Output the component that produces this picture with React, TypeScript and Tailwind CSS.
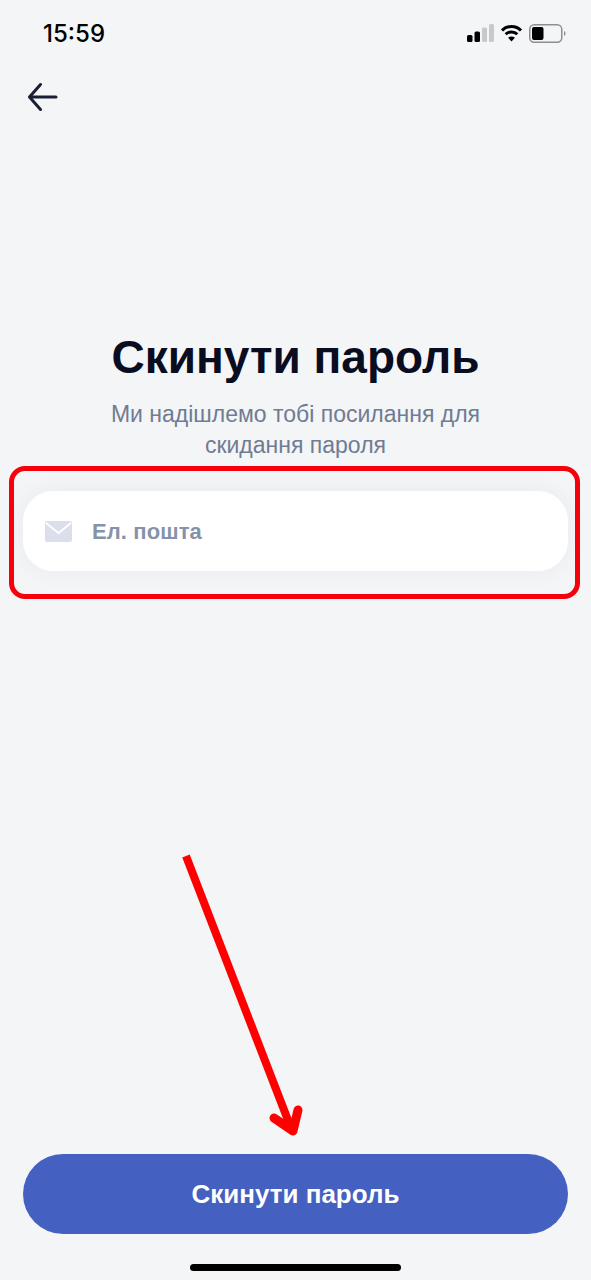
import React from 'react';

const StatusIcons: React.FC = () => (
  <div className="flex items-center gap-[6px]">
    <svg width="27" height="18" viewBox="0 0 27 18">
      <rect x="0" y="11" width="5.500" height="7" rx="1.500" fill="#000" />
      <rect x="7.500" y="7.500" width="5.500" height="10.500" rx="1.500" fill="#000" />
      <rect x="15" y="3.500" width="5" height="14.500" rx="1.500" fill="#c8c9cb" />
      <rect x="22" y="0" width="5" height="18" rx="1.500" fill="#c8c9cb" />
    </svg>
    <svg width="23" height="18" viewBox="0 0 22 18" fill="none" stroke="#000" strokeWidth="3">
      <path d="M1.500 6.500C6.500 1.200 15.500 1.200 20.500 6.500" />
      <path d="M5.200 10.300C8.200 7.200 13.800 7.200 16.800 10.300" />
      <path d="M11 17.500L7.600 13.800C9.400 12.200 12.600 12.200 14.400 13.800Z" fill="#000" stroke="none" />
    </svg>
    <svg width="37" height="19" viewBox="0 0 37 19">
      <rect x="0.750" y="0.750" width="32" height="17.500" rx="4.500" fill="none" stroke="#8e8e90" strokeWidth="1.500" />
      <rect x="3" y="3" width="11.500" height="13" rx="2" fill="#000" />
      <path d="M35 7c1 .5 1.500 1.400 1.500 2.500S36 11.500 35 12z" fill="#8e8e90" />
    </svg>
  </div>
);

const App: React.FC = () => {
  return (
    <div className="relative flex h-[1280px] w-[591px] flex-col overflow-hidden bg-[#f4f5f7] font-['Liberation_Sans',sans-serif]">
      <div className="flex h-[66px] items-center justify-between pl-[43px] pr-[25px]">
        <span className="pt-[2px] font-['Inter',sans-serif] text-[24px] leading-none font-medium text-black">15:59</span>
        <StatusIcons />
      </div>

      <div className="pl-[24px] pt-[12px]">
        <svg width="38" height="38" viewBox="0 0 38 38" fill="none" stroke="#1a2033" strokeWidth="3" strokeLinecap="round" strokeLinejoin="round">
          <path d="M32 19H6" />
          <path d="M16.500 6.500L5.500 19L16.500 31.500" />
        </svg>
      </div>

      <div className="flex flex-col items-center pt-[214px]">
        <h1 className="text-[46px] leading-[54px] font-bold text-[#0a0d20]">Скинути пароль</h1>
        <p className="mt-[15px] w-[420px] text-center text-[23px] leading-[31px] text-[#6f7c92]">
          Ми надішлемо тобі посилання для скидання пароля
        </p>
      </div>

      <div className="mx-[23px] mt-[30px] flex h-[80px] items-center rounded-[30px] bg-white pl-[22px] shadow-[0_0_24px_rgba(20,30,60,0.05)]">
        <svg width="27" height="21" viewBox="0 0 27 21">
          <rect x="0" y="0" width="27" height="21" rx="2" fill="#dadfeb" />
          <path d="M1 2L13.500 12L26 2" fill="none" stroke="#ffffff" strokeWidth="1.800" />
        </svg>
        <span className="ml-[20px] text-[22px] font-bold tracking-[0.1px] text-[#8593aa]">Ел. пошта</span>
      </div>

      <div className="mt-auto flex flex-col items-center">
        <button className="flex h-[80px] w-[545px] items-center justify-center rounded-[40px] bg-[#4460c0] text-[26px] font-bold text-white">
          Скинути пароль
        </button>
        <div className="mt-[30px] mb-[9px] h-[7px] w-[211px] rounded-full bg-black" />
      </div>

      {/* annotations drawn over the screenshot */}
      <div className="absolute left-[9px] top-[466px] h-[133px] w-[571px] rounded-[16px] border-[5px] border-[#f5000b]" />
      <svg className="absolute left-0 top-0" width="591" height="1280" fill="none" stroke="#fe0000" strokeWidth="8">
        <path d="M186 856L291 1128" />
        <path d="M274 1118L293 1131L298 1110" strokeWidth="9" strokeLinecap="round" strokeLinejoin="round" />
      </svg>
    </div>
  );
};

export default App;
